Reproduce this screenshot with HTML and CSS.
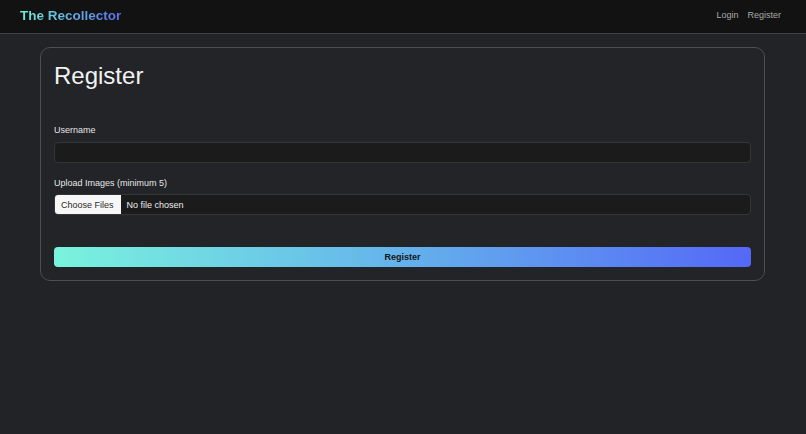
FILE: index.html
```html
<!DOCTYPE html>
<html lang="en">
<head>
<meta charset="utf-8">
<title>Register - The Recollector</title>
<link rel="stylesheet" href="styles.css">
</head>
<body>
<header class="navbar">
  <a class="brand" href="#">The Recollector</a>
  <nav class="nav-links">
    <a href="#">Login</a>
    <a href="#">Register</a>
  </nav>
</header>
<main class="container">
  <section class="card">
    <h1 class="card-title">Register</h1>
    <form class="form">
      <div class="form-group">
        <label class="form-label" for="username">Username</label>
        <input class="form-input" id="username" type="text">
      </div>
      <div class="form-group form-group-files">
        <label class="form-label form-label-files" for="images">Upload Images (minimum 5)</label>
        <input class="form-file" id="images" type="file" multiple>
      </div>
      <button class="btn-submit" type="submit">Register</button>
    </form>
  </section>
</main>
</body>
</html>
```
FILE: styles.css
```css
* { box-sizing: border-box; }
html, body { margin: 0; padding: 0; }
body {
  background: #212327;
  color: #e8e8e8;
  font-family: "Liberation Sans", Arial, sans-serif;
  min-height: 434px;
}
.navbar {
  height: 34px;
  background: #121212;
  border-bottom: 1px solid #3f4145;
  display: flex;
  align-items: center;
  justify-content: space-between;
  padding: 0 25px 0 20px;
}
.brand {
  font-size: 13.5px;
  font-weight: bold;
  text-decoration: none;
  background: linear-gradient(90deg, #71ecd3 0%, #5a72f0 100%);
  -webkit-background-clip: text;
  background-clip: text;
  color: transparent;
  margin-top: -2px;
}
.nav-links {
  display: flex;
  gap: 9px;
  margin-top: -3px;
}
.nav-links a {
  font-size: 9px;
  color: #a9a9a9;
  text-decoration: none;
}
.container {
  padding: 13px 41px 0 40px;
}
.card {
  background: #222428;
  border: 1px solid #4c4e52;
  border-radius: 10px;
  padding: 13px;
}
.card-title {
  margin: 0 0 35px;
  font-size: 24px;
  font-weight: normal;
  line-height: 29px;
  color: #f2f2f2;
}
.form { display: flex; flex-direction: column; }
.form-group {
  display: flex;
  flex-direction: column;
  margin-bottom: 15px;
}
.form-group-files { margin-bottom: 32px; }
.form-label {
  font-size: 9px;
  line-height: 11px;
  color: #e6e6e6;
  margin-bottom: 6px;
}
.form-label-files { margin-bottom: 5px; }
.form-input {
  height: 21px;
  background: #1b1b1c;
  border: 1px solid #333538;
  border-radius: 4px;
  color: #eee;
  font-family: inherit;
  font-size: 9px;
  padding: 0 6px;
  outline: none;
}
.form-file {
  height: 21px;
  background: #1b1b1c;
  border: 1px solid #333538;
  border-radius: 4px;
  color: #eeeeee;
  font-family: inherit;
  font-size: 9px;
  padding: 0;
  display: flex;
  align-items: center;
}
.form-file::file-selector-button {
  height: 21px;
  margin: -1px 6px -1px -1px;
  padding: 0 7px;
  background: #f7f7f7;
  color: #2a2a2a;
  border: none;
  border-radius: 4px 0 0 4px;
  font-family: inherit;
  font-size: 9px;
}
.btn-submit {
  height: 20px;
  border: none;
  border-radius: 4px;
  background: linear-gradient(90deg, #79f3dd 0%, #66b9ea 45%, #5468f7 100%);
  color: #151515;
  font-family: inherit;
  font-size: 9px;
  font-weight: bold;
  cursor: pointer;
}
```
